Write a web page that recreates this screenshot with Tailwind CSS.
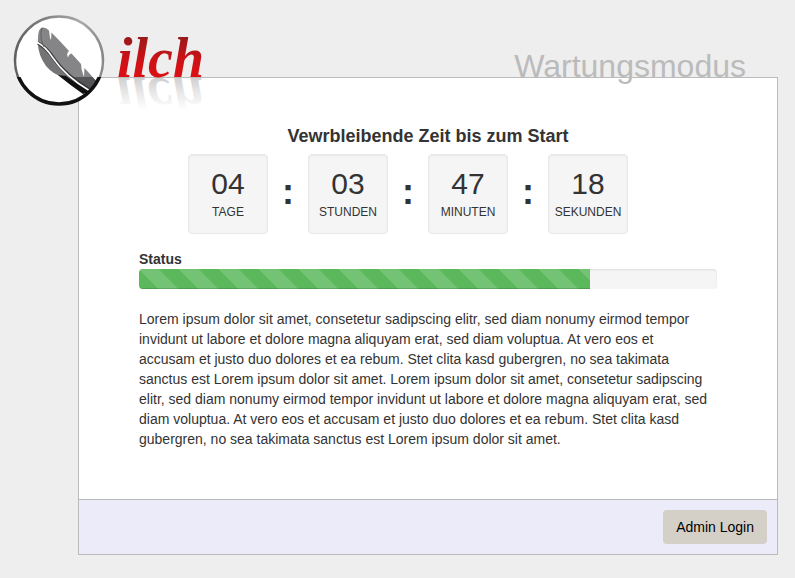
<!DOCTYPE html>
<html lang="de">
<head>
  <meta charset="UTF-8">
  <meta name="viewport" content="width=device-width, initial-scale=1.0">
  <title>Wartungsmodus</title>
  <script src="https://cdn.jsdelivr.net/npm/@tailwindcss/browser@4"></script>
</head>
<body class="bg-[#eeeeee] font-['Liberation_Sans',Arial,sans-serif] text-sm leading-5 text-[#333333]">

  <div class="relative pt-[77px] pr-[17px] pb-6 pl-[78px]">

    <main class="border border-[#bbbbbb] bg-white">
      <section class="px-[60px] pt-12 pb-[50px]">
        <h2 class="text-center text-lg leading-5 font-bold">Vewrbleibende Zeit bis zum Start</h2>

        <!-- Countdown -->
        <div class="mt-2 flex justify-center pr-10">
          <div class="h-20 w-20 rounded border border-[#e8e8e8] bg-[#f5f5f5] pt-[11px] text-center shadow-[inset_0_1px_2px_rgba(0,0,0,0.05)]">
            <div id="days" class="text-[30px] leading-9">04</div>
            <div class="text-xs leading-5">TAGE</div>
          </div>
          <div class="w-10 pt-[18px] text-center text-4xl font-bold">:</div>
          <div class="h-20 w-20 rounded border border-[#e8e8e8] bg-[#f5f5f5] pt-[11px] text-center shadow-[inset_0_1px_2px_rgba(0,0,0,0.05)]">
            <div id="hours" class="text-[30px] leading-9">03</div>
            <div class="text-xs leading-5">STUNDEN</div>
          </div>
          <div class="w-10 pt-[18px] text-center text-4xl font-bold">:</div>
          <div class="h-20 w-20 rounded border border-[#e8e8e8] bg-[#f5f5f5] pt-[11px] text-center shadow-[inset_0_1px_2px_rgba(0,0,0,0.05)]">
            <div id="minutes" class="text-[30px] leading-9">47</div>
            <div class="text-xs leading-5">MINUTEN</div>
          </div>
          <div class="w-10 pt-[18px] text-center text-4xl font-bold">:</div>
          <div class="h-20 w-20 rounded border border-[#e8e8e8] bg-[#f5f5f5] pt-[11px] text-center shadow-[inset_0_1px_2px_rgba(0,0,0,0.05)]">
            <div id="seconds" class="text-[30px] leading-9">18</div>
            <div class="text-xs leading-5">SEKUNDEN</div>
          </div>
        </div>

        <!-- Progress -->
        <div id="status" class="mt-[15px] font-bold">Status</div>
        <div role="progressbar" aria-labelledby="status" aria-valuemin="0" aria-valuemax="100" aria-valuenow="78" class="h-5 overflow-hidden rounded bg-[#f5f5f5] shadow-[inset_0_1px_2px_rgba(0,0,0,0.1)]">
          <div class="h-full bg-[#5cb85c] bg-[linear-gradient(45deg,rgba(255,255,255,.15)_25%,transparent_25%,transparent_50%,rgba(255,255,255,.15)_50%,rgba(255,255,255,.15)_75%,transparent_75%,transparent)] bg-size-[40px_40px] shadow-[inset_0_-1px_0_rgba(0,0,0,0.15)]" style="width: 78%"></div>
        </div>

        <p class="mt-5 pr-[5px]">Lorem ipsum dolor sit amet, consetetur sadipscing elitr, sed diam nonumy eirmod tempor invidunt ut labore et dolore magna aliquyam erat, sed diam voluptua. At vero eos et accusam et justo duo dolores et ea rebum. Stet clita kasd gubergren, no sea takimata sanctus est Lorem ipsum dolor sit amet. Lorem ipsum dolor sit amet, consetetur sadipscing elitr, sed diam nonumy eirmod tempor invidunt ut labore et dolore magna aliquyam erat, sed diam voluptua. At vero eos et accusam et justo duo dolores et ea rebum. Stet clita kasd gubergren, no sea takimata sanctus est Lorem ipsum dolor sit amet.</p>
      </section>

      <footer class="flex justify-end border-t border-[#bbbbbb] bg-[#ebebfa] p-[10px]">
        <a href="#login" class="rounded bg-[#d4d0c8] px-[13px] py-[7px] text-black">Admin Login</a>
      </footer>
    </main>

    <h1 class="absolute top-12 right-[49px] text-[32px] leading-9 text-[#bbbbbb]">Wartungsmodus</h1>

    <!-- Logo: feather badge, wordmark and its reflection -->
    <svg class="absolute top-0 left-0" width="220" height="130" viewBox="0 0 220 130" role="img" aria-label="ilch">
      <defs>
        <linearGradient id="ring" x1="0" y1="0" x2="1" y2="0">
          <stop offset="0" stop-color="#606060"/>
          <stop offset="0.75" stop-color="#aaaaaa"/>
          <stop offset="1" stop-color="#888888"/>
        </linearGradient>
        <linearGradient id="red" gradientUnits="userSpaceOnUse" x1="0" y1="32" x2="0" y2="77">
          <stop offset="0" stop-color="#8e1b1b"/>
          <stop offset="0.6" stop-color="#cc1217"/>
          <stop offset="1" stop-color="#dc1014"/>
        </linearGradient>
        <linearGradient id="fade" gradientUnits="userSpaceOnUse" x1="0" y1="77" x2="0" y2="44">
          <stop offset="0" stop-color="#777777" stop-opacity="0.35"/>
          <stop offset="1" stop-color="#999999" stop-opacity="0"/>
        </linearGradient>
        <clipPath id="upper"><rect width="120" height="77"/></clipPath>
        <clipPath id="lower"><rect y="77" width="120" height="43"/></clipPath>
        <clipPath id="disc"><circle cx="59" cy="60.5" r="44"/></clipPath>
        <path id="vane" d="M38 38 Q38 29 42 27.500 Q46 27 49 30.500 L50 38 L51 40 L51.500 32.500 Q60 41 69 51 Q66 53 68 57.500 Q69 54 71.500 53.500 L81 64 Q81 70 84 77 L84.500 68 L99 84 L88 94 Q80 92 58 75 Q48 69 42 57 Q37 46 38 38 Z"/>
      </defs>
      <circle cx="59" cy="60.5" r="44" fill="#fff"/>
      <g clip-path="url(#disc)">
        <use href="#vane" fill="#858587" clip-path="url(#upper)"/>
        <g clip-path="url(#lower)"><use href="#vane" fill="#555557"/></g>
        <path d="M38 43 Q38 55 46 66 Q53 74 61 76 L72 79 Q54 66 46 51 Z" fill="#747476"/>
        <path d="M58 75 Q70 85 83 94 L90 91 Q76 84 66 76 Z" fill="#111"/>
        <path d="M38 43 Q47 48 54 59 Q66 76 90 90" fill="none" stroke="#3a3a3a" stroke-width="3.500"/>
        <path d="M37.500 42.500 Q46 47 53 58 Q65 76 90 91" fill="none" stroke="#fff" stroke-width="1.500"/>
        <path d="M42 28 Q39 37 44 47" fill="none" stroke="#606060" stroke-width="1"/>
      </g>
      <g clip-path="url(#upper)">
        <circle cx="59" cy="60.5" r="44" fill="none" stroke="url(#ring)" stroke-width="2.500"/>
      </g>
      <g clip-path="url(#lower)">
        <circle cx="59" cy="60.5" r="43.500" fill="none" stroke="#111" stroke-width="3.500"/>
      </g>
      <text x="117" y="77" fill="url(#red)" font-family="'Liberation Serif', serif" font-size="56" font-style="italic" font-weight="bold">ilch</text>
      <g transform="translate(0 155) scale(1 -1)" aria-hidden="true">
        <text x="117" y="77" fill="url(#fade)" font-family="'Liberation Serif', serif" font-size="56" font-style="italic" font-weight="bold">ilch</text>
      </g>
    </svg>
  </div>

</body>
</html>
